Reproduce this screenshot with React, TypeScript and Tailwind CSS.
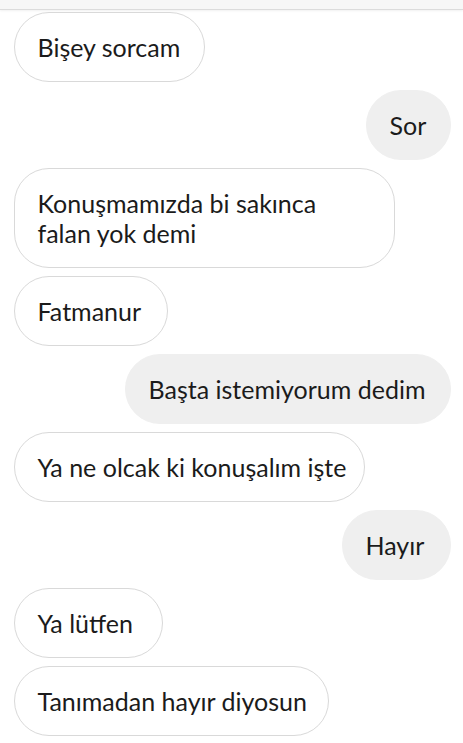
import React from "react";

type Msg = { text: React.ReactNode; mine: boolean; w: string; tall?: boolean };

const msgs: Msg[] = [
  { text: "Bişey sorcam", mine: false, w: "w-[191px]" },
  { text: "Sor", mine: true, w: "w-[85px]" },
  {
    text: (
      <>
        Konuşmamızda bi sakınca
        <br />
        falan yok demi
      </>
    ),
    mine: false,
    w: "w-[381px]",
    tall: true,
  },
  { text: "Fatmanur", mine: false, w: "w-[154px]" },
  { text: "Başta istemiyorum dedim", mine: true, w: "w-[326px]" },
  { text: "Ya ne olcak ki konuşalım işte", mine: false, w: "w-[351px]" },
  { text: "Hayır", mine: true, w: "w-[109px]" },
  { text: "Ya lütfen", mine: false, w: "w-[149px]" },
  { text: "Tanımadan hayır diyosun", mine: false, w: "w-[315px]" },
];

export default function App() {
  return (
    <div className="w-[463px] h-[743px] bg-white overflow-hidden font-['Lato','Noto_Sans',sans-serif] text-[#1b1b1b]">
      <div className="h-[10px] bg-[#f7f7f7] border-b border-[#dcdcdc] shadow-[0_1px_2px_rgba(0,0,0,0.06)]" />
      <div className="flex flex-col gap-2 pl-[14px] pr-[12px] pt-[2px]">
        {msgs.map((m, i) => (
          <div key={i} className={m.mine ? "flex justify-end" : "flex justify-start"}>
            <div
              className={
                m.w +
                (m.tall ? " h-[100px]" : " h-[70px]") +
                " flex items-center rounded-[35px] pl-[22.5px] pr-[20px] text-[25px] leading-[30px] whitespace-nowrap " +
                (m.mine
                  ? "bg-[#efefef] border-[1.5px] border-[#efefef]"
                  : "bg-white border-[1.5px] border-[#d9d9d9]")
              }
            >
              <div>{m.text}</div>
            </div>
          </div>
        ))}
      </div>
    </div>
  );
}
